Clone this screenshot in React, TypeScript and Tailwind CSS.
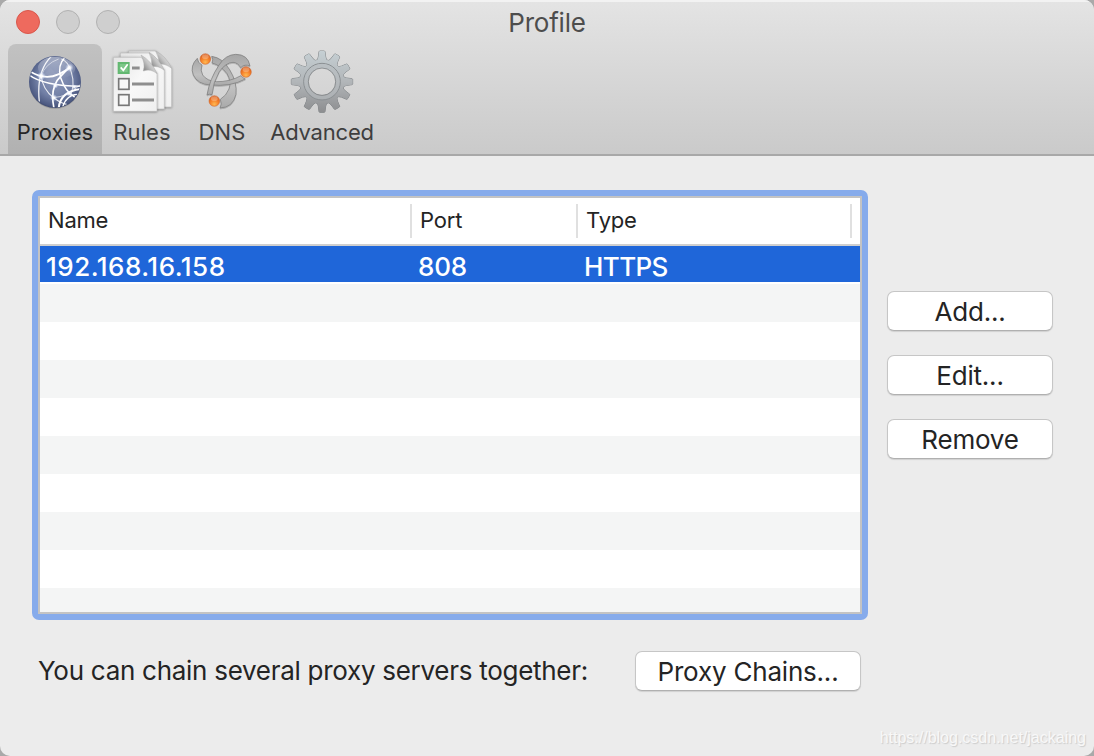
import React from 'react';

function GlobeIcon() {
    return (
        <svg viewBox="9 15 192 192" className="size-16 overflow-visible">
            <defs>
                <radialGradient id="globe" cx="0.5" cy="0.45" r="0.6">
                    <stop offset="0" stopColor="#8e99ba" />
                    <stop offset="0.55" stopColor="#7280a6" />
                    <stop offset="0.85" stopColor="#4d5a82" />
                    <stop offset="1" stopColor="#2a3354" />
                </radialGradient>
                <linearGradient id="globeShine" x1="0" y1="0" x2="0" y2="1">
                    <stop offset="0" stopColor="#fff" stopOpacity="0.42" />
                    <stop offset="1" stopColor="#fff" stopOpacity="0" />
                </linearGradient>
                <radialGradient id="spark">
                    <stop offset="0" stopColor="#fff" />
                    <stop offset="0.35" stopColor="#fff" stopOpacity="0.8" />
                    <stop offset="1" stopColor="#c4d4ff" stopOpacity="0" />
                </radialGradient>
                <clipPath id="globeClip">
                    <circle cx="105" cy="111" r="76" />
                </clipPath>
            </defs>
            <ellipse cx="105" cy="116" rx="77" ry="76" fill="#000" opacity="0.14" />
            <circle cx="105" cy="111" r="78" fill="url(#globe)" />
            <g clipPath="url(#globeClip)" fill="none" stroke="#fff">
                <ellipse cx="110" cy="68" rx="56" ry="34" fill="url(#globeShine)" stroke="none" />
                <path d="M65 93 L92 68 L122 102 L94 116 Z" fill="#a3aac4" opacity="0.25" stroke="none" />
                <path d="M28 78 Q90 118 150 66" strokeWidth="5" />
                <path d="M28 90 Q70 122 184 124" strokeWidth="4.5" />
                <path d="M94 34 Q48 80 58 170" strokeWidth="4" opacity="0.9" />
                <path d="M63 90 Q68 134 101 158 Q122 174 140 178" strokeWidth="3.5" opacity="0.85" />
                <path d="M102 190 Q88 126 124 92 Q136 78 150 67" strokeWidth="5" />
                <path d="M64 92 Q76 56 116 42" strokeWidth="2.5" opacity="0.65" />
                <path d="M134 38 Q112 60 122 98 Q136 140 164 156" strokeWidth="4.5" />
                <path d="M124 42 Q146 50 154 82 Q166 120 150 156" strokeWidth="3.5" opacity="0.75" />
                <path d="M100 158 Q142 156 182 118" strokeWidth="2.5" opacity="0.8" />
                <path d="M116 190 Q120 140 182 132" strokeWidth="6" />
                <path d="M128 186 Q138 150 172 148" strokeWidth="4" />
                <g fill="url(#spark)" stroke="none">
                    <circle cx="64" cy="93" r="13" />
                    <circle cx="148" cy="68" r="13" />
                    <circle cx="101" cy="158" r="11" />
                    <circle cx="147" cy="146" r="9" />
                    <circle cx="106" cy="122" r="9" />
                    <circle cx="163" cy="126" r="8" />
                </g>
            </g>
        </svg>
    );
}

function RulesIcon() {
    return (
        <svg viewBox="15 15 192 192" className="size-16 overflow-visible">
            <defs>
                <linearGradient id="page" x1="0" y1="0" x2="1" y2="1">
                    <stop offset="0" stopColor="#e4e4e4" />
                    <stop offset="0.5" stopColor="#f8f8f8" />
                    <stop offset="1" stopColor="#efefef" />
                </linearGradient>
                <linearGradient id="fold" x1="0.1" y1="0.9" x2="0.9" y2="0.2">
                    <stop offset="0" stopColor="#747474" />
                    <stop offset="0.5" stopColor="#c4c4c4" />
                    <stop offset="1" stopColor="#efefef" />
                </linearGradient>
                <filter id="pageShadow" x="-10%" y="-10%" width="120%" height="120%">
                    <feDropShadow dx="0" dy="1.5" stdDeviation="3" floodOpacity="0.45" />
                </filter>
            </defs>
            <g fill="url(#page)" stroke="#adadad" strokeWidth="1.5">
                <g filter="url(#pageShadow)">
                    <path d="M70 18 H152 L200 68 V186 H70 Z" />
                </g>
                <path d="M152 18 Q164 40 160 58 Q180 54 200 70 Q184 34 152 18 Z" fill="url(#fold)" />
                <g filter="url(#pageShadow)">
                    <path d="M46 24 H132 L178 74 V192 H46 Z" />
                </g>
                <path d="M132 22 Q144 46 138 66 Q160 60 178 76 Q162 40 132 22 Z" fill="url(#fold)" />
                <g filter="url(#pageShadow)">
                    <path d="M25 37 H108 L156 84 V199 H25 Z" />
                </g>
                <path d="M108 30 Q122 56 115 78 Q138 70 156 86 Q140 48 108 30 Z" fill="url(#fold)" />
            </g>
            <rect x="38" y="51" width="36" height="36" fill="#63b871" />
            <rect x="44" y="57" width="24" height="24" fill="#7cc788" />
            <path d="M47 67 L55 76 L68 58" fill="none" stroke="#fff" strokeWidth="5" />
            <g fill="#f7f7f7" stroke="#777" strokeWidth="5">
                <rect x="41" y="101" width="31" height="32" />
                <rect x="41" y="149" width="31" height="32" />
            </g>
            <g stroke="#8e8e8e" strokeWidth="9">
                <path d="M81 69 H104" />
                <path d="M81 117 H147" />
                <path d="M81 165 H147" />
            </g>
        </svg>
    );
}

function DnsIcon() {
    return (
        <svg viewBox="15 15 192 192" className="size-16 overflow-visible">
            <defs>
                <linearGradient id="blade" x1="0" y1="0" x2="0" y2="1">
                    <stop offset="0" stopColor="#a6a6a6" />
                    <stop offset="0.6" stopColor="#c0c0c0" />
                    <stop offset="1" stopColor="#aaaaaa" />
                </linearGradient>
                <radialGradient id="ball" cx="0.5" cy="0.8" r="0.8">
                    <stop offset="0" stopColor="#ffb952" />
                    <stop offset="0.5" stopColor="#f58029" />
                    <stop offset="1" stopColor="#d65c1e" />
                </radialGradient>
                <filter id="bladeShadow" x="-10%" y="-10%" width="120%" height="125%">
                    <feDropShadow dx="0" dy="3" stdDeviation="2" floodOpacity="0.2" />
                </filter>
            </defs>
            <g fill="url(#blade)" stroke="#757575" strokeWidth="2" strokeLinejoin="round" filter="url(#bladeShadow)">
                {/* bottom blade, tapering up to the left ball */}
                <path d="M105 189 Q144 188 153 148 Q157 112 134 74 Q112 38 80 34 Q86 44 81 54 Q106 60 126 86 Q140 110 132 132 Q124 152 106 163 Q112 177 105 189 Z" />
                {/* left blade, tapering out to the right ball */}
                <path d="M37 40 Q14 62 25 90 Q38 118 76 120 Q138 126 181 102 Q172 99 168 92 Q134 111 94 110 Q66 108 53 90 Q45 76 51 60 Q38 54 37 40 Z" />
                {/* top-right blade, tapering down to the bottom ball */}
                <path d="M195 63 Q189 28 152 28 Q122 29 102 60 Q74 102 66 150 Q73 146 81 149 Q84 112 103 80 Q122 53 144 52 Q159 53 167 68 Q179 56 195 63 Z" />
            </g>
            <g fill="url(#ball)" stroke="#c8602a" strokeWidth="1.5">
                <circle cx="61" cy="42" r="16" />
                <circle cx="183" cy="81" r="16" />
                <circle cx="88" cy="168" r="16" />
            </g>
            <g fill="#fff" opacity="0.25">
                <ellipse cx="61" cy="35" rx="10" ry="7" />
                <ellipse cx="183" cy="74" rx="10" ry="7" />
                <ellipse cx="88" cy="161" rx="10" ry="7" />
            </g>
        </svg>
    );
}

function GearIcon() {
    const teeth = Array.from({ length: 12 }, (_, i) => i * 30);

    return (
        <svg viewBox="30 30 192 192" className="size-16 overflow-visible">
            <defs>
                <linearGradient id="gear" gradientUnits="userSpaceOnUse" x1="0" y1="-94" x2="0" y2="94">
                    <stop offset="0" stopColor="#c6d0d4" />
                    <stop offset="0.5" stopColor="#b2b6b9" />
                    <stop offset="1" stopColor="#8c8d8f" />
                </linearGradient>
                <mask id="gearHole" maskUnits="userSpaceOnUse" x="-110" y="-110" width="220" height="220">
                    <rect x="-110" y="-110" width="220" height="220" fill="#fff" />
                    <circle r="41" fill="#000" />
                </mask>
                <mask id="gearShape" maskUnits="userSpaceOnUse" x="-110" y="-110" width="220" height="220">
                    <circle r="67" fill="#fff" />
                    {teeth.map((angle) => (
                        <path key={angle} d="M-15 -62 Q-10 -72 -9 -90 Q-8 -92 -6 -92 H6 Q8 -92 9 -90 Q10 -72 15 -62 Z" fill="#fff" transform={`rotate(${angle})`} />
                    ))}
                    <circle r="41" fill="#000" />
                </mask>
            </defs>
            <g transform="translate(126 125)">
                <g mask="url(#gearHole)" fill="#7d8184" stroke="#7d8184" strokeWidth="2.5" strokeLinejoin="round">
                    <circle r="67" />
                    {teeth.map((angle) => (
                        <path key={angle} d="M-15 -62 Q-10 -72 -9 -90 Q-8 -92 -6 -92 H6 Q8 -92 9 -90 Q10 -72 15 -62 Z" transform={`rotate(${angle})`} />
                    ))}
                </g>
                <rect x="-110" y="-110" width="220" height="220" fill="url(#gear)" mask="url(#gearShape)" />
                <circle r="55" fill="none" stroke="#8b9093" strokeWidth="3" />
                <circle r="48" fill="none" stroke="#b8bdc0" strokeWidth="10" opacity="0.6" />
                <circle r="41" fill="none" stroke="#85898c" strokeWidth="2.5" />
            </g>
        </svg>
    );
}

const tabs = [
    { label: 'Proxies', icon: GlobeIcon, width: 'w-[94px]', spacing: 'tracking-normal', active: true },
    { label: 'Rules', icon: RulesIcon, width: 'w-20', spacing: 'tracking-[0.1px]', active: false },
    { label: 'DNS', icon: DnsIcon, width: 'w-20', spacing: 'tracking-[0.1px]', active: false },
    { label: 'Advanced', icon: GearIcon, width: 'w-[120px]', spacing: 'tracking-[-0.2px]', active: false }
];

const emptyRows = Array.from({ length: 9 }, (_, i) => i);

function PushButton({ children, className = 'w-[166px]' }: { children: React.ReactNode; className?: string }) {
    return (
        <button className={`flex h-10 shrink-0 items-center justify-center rounded-[7px] border border-[#c6c6c6] border-b-[#b0b0b0] bg-white pt-0.5 text-[26px] leading-none tracking-[-0.2px] shadow-[0_1px_1px_rgba(0,0,0,0.12)] ${className}`}>
            {children}
        </button>
    );
}

function Toolbar() {
    return (
        <header className="h-[156px] border-b-2 border-[#a8a8a8] bg-linear-to-b from-[#e4e4e4] to-[#cacaca] shadow-[inset_0_2px_0_#f2f2f2]">
            <div className="grid h-11 grid-cols-[1fr_auto_1fr] items-center">
                <div className="flex gap-4 pl-4">
                    <span className="size-6 rounded-full border border-[#d9574c] bg-[#ee6a5e]" />
                    <span className="size-6 rounded-full border border-[#b1b1b1] bg-[#cfcfcf]" />
                    <span className="size-6 rounded-full border border-[#b1b1b1] bg-[#cfcfcf]" />
                </div>
                <h1 className="pt-0.5 text-[26px] leading-none tracking-[-0.2px] text-[#4d4d4d]">Profile</h1>
            </div>
            <nav className="flex pl-2">
                {tabs.map((tab) => (
                    <div key={tab.label} className={`flex h-[110px] flex-col items-center gap-1.5 rounded-t-lg pt-1.5 ${tab.width} ${tab.active ? 'bg-black/12 text-[#262626]' : 'text-[#3e3e3e]'}`}>
                        <tab.icon />
                        <span className={`text-[22px] leading-6 whitespace-nowrap ${tab.spacing}`}>{tab.label}</span>
                    </div>
                ))}
            </nav>
        </header>
    );
}

function ProxyTable() {
    return (
        <div className="h-[430px] w-[836px] rounded-[7px] bg-[#86abeb] p-1.5">
            <div className="flex h-full flex-col overflow-hidden border-2 border-[#c3c3c3] bg-white">
                <div className="flex h-12 shrink-0 items-center border-b-2 border-[#cfcfcf] text-[22px] leading-none tracking-[-0.2px]">
                    <div className="flex h-[34px] w-[372px] items-center border-r-2 border-[#e0e0e0] pb-0.5 pl-2">Name</div>
                    <div className="flex h-[34px] w-[166px] items-center border-r-2 border-[#e0e0e0] pb-0.5 pl-2">Port</div>
                    <div className="flex h-[34px] w-[274px] items-center border-r-2 border-[#e0e0e0] pb-0.5 pl-2">Type</div>
                </div>
                <div className="mb-0.5 flex h-9 shrink-0 items-center bg-[#1f66d9] pt-1.5 text-[26px] leading-none font-medium text-white">
                    <span className="w-[372px] pl-1.5 tracking-[0.5px]">192.168.16.158</span>
                    <span className="w-[166px] pl-1.5 tracking-[-0.2px]">808</span>
                    <span className="pl-1.5 tracking-[-0.6px]">HTTPS</span>
                </div>
                {emptyRows.map((row) => (
                    <div key={row} className="h-[38px] shrink-0 odd:bg-white even:bg-white nth-[2n+3]:bg-[#f4f5f5]" />
                ))}
            </div>
        </div>
    );
}

export default function App() {
    return (
        <div className="h-[756px] w-[1094px] overflow-hidden bg-[#a9a9a9] font-['Inter','Liberation_Sans',sans-serif] text-[#242424]">
            <div className="flex h-full flex-col overflow-hidden rounded-[10px] bg-[#ececec]">
                <Toolbar />
                <main className="flex pt-[34px] pl-8">
                    <ProxyTable />
                    <div className="flex flex-col gap-6 pt-[101px] pl-[19px]">
                        <PushButton>Add...</PushButton>
                        <PushButton>Edit...</PushButton>
                        <PushButton>Remove</PushButton>
                    </div>
                </main>
                <div className="flex items-center pt-[31px] pl-[38px]">
                    <p className="w-[597px] text-[26px] leading-10 tracking-[-0.28px] whitespace-nowrap">You can chain several proxy servers together:</p>
                    <PushButton className="w-[226px]">Proxy Chains...</PushButton>
                </div>
                <footer className="mt-auto flex justify-end pr-2 pb-[7px] font-['Liberation_Sans',sans-serif] text-base leading-[22px] text-[#f8f8f8] [text-shadow:1px_1px_1px_#cccccc]">
                    https://blog.csdn.net/jackaing
                </footer>
            </div>
        </div>
    );
}
